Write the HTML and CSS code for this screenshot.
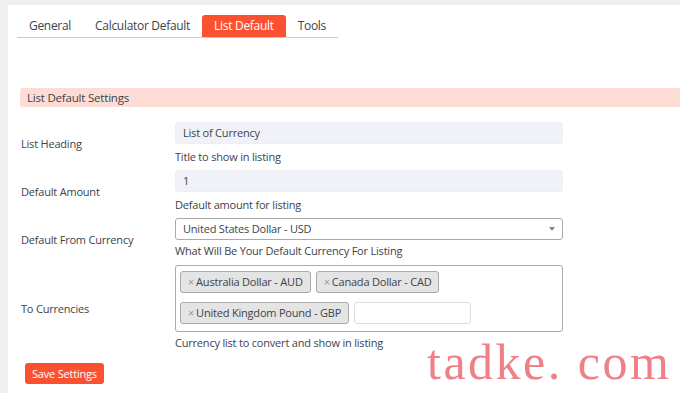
FILE: index.html
```html
<!DOCTYPE html>
<html lang="en">
<head>
    <meta charset="UTF-8"/>
    <title>List Default Settings</title>
    <link rel="stylesheet" href="styles.css">
</head>
<body>
<div class="panel">
    <div class="tabs">
        <a class="tab">General</a>
        <a class="tab">Calculator Default</a>
        <a class="tab active">List Default</a>
        <a class="tab">Tools</a>
    </div>

    <div class="section-title">List Default Settings</div>

    <div class="rows">
        <div class="row">
            <div class="label">List Heading</div>
            <div class="field">
                <div class="input filled">List of Currency</div>
                <div class="help">Title to show in listing</div>
            </div>
        </div>

        <div class="row">
            <div class="label">Default Amount</div>
            <div class="field">
                <div class="input filled">1</div>
                <div class="help">Default amount for listing</div>
            </div>
        </div>

        <div class="row">
            <div class="label">Default From Currency</div>
            <div class="field">
                <div class="input select">United States Dollar - USD <span class="caret"></span></div>
                <div class="help tight">What Will Be Your Default Currency For Listing</div>
            </div>
        </div>

        <div class="row">
            <div class="label">To Currencies</div>
            <div class="field">
                <div class="multi">
                    <span class="chip"><span class="x">×</span>Australia Dollar - AUD</span>
                    <span class="chip"><span class="x">×</span>Canada Dollar - CAD</span>
                    <span class="chip"><span class="x">×</span>United Kingdom Pound - GBP</span>
                    <span class="search"></span>
                </div>
                <div class="help tight">Currency list to convert and show in listing</div>
            </div>
        </div>
    </div>

    <button class="save">Save Settings</button>
</div>
<div class="watermark">tadke. com</div>
</body>
</html>
```

FILE: styles.css
```css
body {
    margin: 0;
    background: #f0f0f1;
    font-family: 'Open Sans', sans-serif;
    color: #3c434a;
    font-size: 11px;
    letter-spacing: -0.2px;
    overflow: hidden;
}

.panel {
    margin: 5px 0 0 8px;
    background: #fff;
    height: 400px;
    padding: 10px 0 0 9px;
    box-sizing: border-box;
}

.tabs {
    display: flex;
    width: max-content;
    border-bottom: 1px solid #ccc;
    height: 22px;
    white-space: nowrap;
}

.tab {
    padding: 0 12px;
    font-size: 12px;
    letter-spacing: -0.3px;
    line-height: 22px;
    color: #3c434a;
}

.tab.active {
    background: #fc5130;
    color: #fff;
    border-radius: 3px 3px 0 0;
}

.section-title {
    margin-top: 50px;
    margin-left: 3px;
    background: #fddcd5;
    height: 19px;
    line-height: 19px;
    padding-left: 7px;
    border-radius: 3px 0 0 3px;
    font-size: 11.5px;
}

.rows {
    margin: 15px 0 0 4px;
}

.row {
    display: flex;
    align-items: center;
}

.label {
    width: 154px;
    flex: none;
    padding-bottom: 5px;
}

.field {
    width: 388px;
}

.input {
    height: 22px;
    line-height: 20px;
    padding: 0 7px;
    border-radius: 3px;
    box-sizing: border-box;
}

.input.filled {
    background: #f1f2f7;
    border: 1px solid #eceef3;
}

.input.select {
    background: #fff;
    border: 1px solid #aaa;
    position: relative;
}

.caret {
    position: absolute;
    right: 7px;
    top: 8px;
    border: 3px solid transparent;
    border-top: 4px solid #888;
}

.help {
    margin: 6px 0 6px;
    line-height: 14px;
}

.help.tight {
    margin: 4px 0 7px;
}

.multi {
    border: 1px solid #aaa;
    border-radius: 3px;
    padding: 5px 4px 7px;
    display: flex;
    flex-wrap: wrap;
    gap: 9px 5px;
    width: 388px;
    box-sizing: border-box;
}

.chip {
    background: #e4e4e4;
    border: 1px solid #aaa;
    border-radius: 3px;
    height: 22px;
    line-height: 20px;
    padding: 0 7px;
    box-sizing: border-box;
}

.chip .x {
    color: #999;
    margin-right: 2px;
}

.search {
    width: 117px;
    height: 22px;
    border: 1px solid #ddd;
    border-radius: 3px;
    box-sizing: border-box;
}

.save {
    margin: 6px 0 0 8px;
    background: #fc5130;
    color: #fff;
    border: none;
    border-radius: 3px;
    font-family: 'Open Sans', sans-serif;
    font-size: 11px;
    letter-spacing: -0.2px;
    height: 21px;
    padding: 0 7px;
}

.watermark {
    position: absolute;
    left: 427px;
    top: 337px;
    font-family: 'Liberation Serif', serif;
    font-size: 50px;
    line-height: 1;
    color: #f08088;
    letter-spacing: 2.5px;
}
```
